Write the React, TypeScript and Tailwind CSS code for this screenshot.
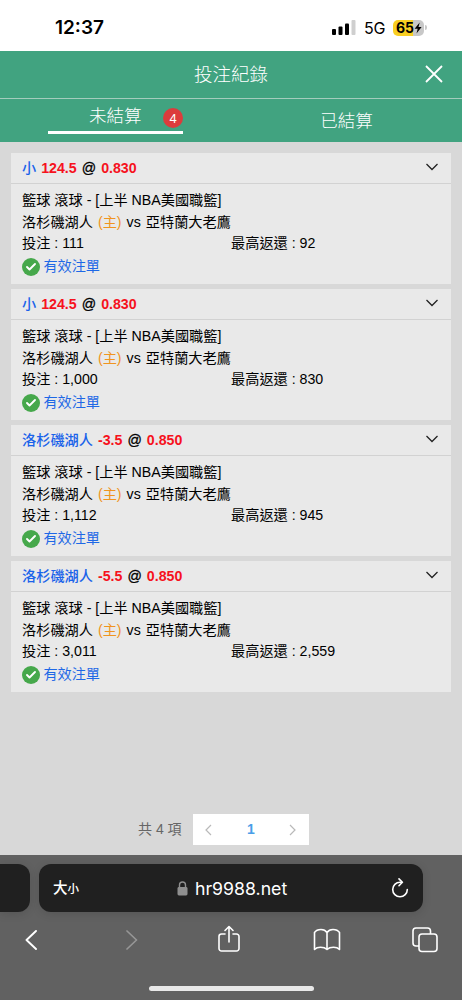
import { Check } from "lucide-react";

interface Bet {
  id: number;
  pick: string;
  line: string;
  odds: string;
  stake: string;
  payout: string;
}

const BETS: Bet[] = [
  { id: 1, pick: "小",         line: "124.5", odds: "0.830", stake: "111",   payout: "92" },
  { id: 2, pick: "小",         line: "124.5", odds: "0.830", stake: "1,000", payout: "830" },
  { id: 3, pick: "洛杉磯湖人", line: "-3.5",  odds: "0.850", stake: "1,112", payout: "945" },
  { id: 4, pick: "洛杉磯湖人", line: "-5.5",  odds: "0.850", stake: "3,011", payout: "2,559" },
];

function StatusBar() {
  return (
    <div className="h-[51px] bg-white flex items-center justify-between pl-[55px] pr-[35px] pt-[4px] font-['Inter','Liberation_Sans',sans-serif] text-black">
      <span className="text-[19px] font-semibold leading-none">12:37</span>
      <div className="flex items-center">
        <svg width="24" height="16" viewBox="0 0 24 16">
          <rect x="0" y="9" width="4" height="6" rx="1" />
          <rect x="6.5" y="6.5" width="4" height="8.5" rx="1" />
          <rect x="13" y="3.5" width="4" height="11.5" rx="1" />
          <rect x="19.5" y="0" width="4" height="15" rx="1" fill="#cfcfcf" />
        </svg>
        <span className="ml-[8px] w-[21px] text-[16px] leading-none tracking-[-0.2px]">5G</span>
        <div className="ml-[8px] w-[31px] h-[16px] rounded-[5px] bg-linear-to-r from-[#f9cf22] from-66% to-[#c8c8c8] to-66% flex items-center pl-[3px]">
          <span className="text-[14px] font-bold leading-none tracking-[-0.2px]">65</span>
          <svg width="8" height="12" viewBox="0 0 8 12">
            <path d="M5.7 0.5 0.6 6.8H3.7L2.5 11.5 7.6 5H4.5Z" />
          </svg>
        </div>
        <span className="ml-px w-[2px] h-[5px] rounded-r-full bg-[#c8c8c8]" />
      </div>
    </div>
  );
}

function Header() {
  return (
    <header className="bg-[#41a380] text-white">
      <div className="h-[47px] grid grid-cols-[60px_1fr_60px] items-center">
        <h1 className="col-start-2 pt-px text-center text-[18.5px] font-light leading-none">投注紀錄</h1>
        <button className="justify-self-center pl-[4px]">
          <svg width="18" height="18" viewBox="0 0 18 18" fill="none" stroke="currentColor" strokeWidth="1.8" className="-translate-y-px">
            <path d="M1 1 17 17M17 1 1 17" />
          </svg>
        </button>
      </div>
      <div className="h-[44px] flex border-t border-[#a3ccbd]">
        <div className="w-1/2 flex justify-center">
          <div className="w-[135px] h-[35px] border-b-[3px] border-white flex items-center pl-[41px] pt-[4px]">
            <span className="text-[17.5px] font-light leading-none">未結算</span>
            <span className="ml-auto mt-[2px] size-[20px] rounded-full bg-[#dc3c3c] flex items-center justify-center text-[13px] leading-none">4</span>
          </div>
        </div>
        <div className="w-1/2 h-[42px] pt-[3px] flex items-center justify-center">
          <span className="text-[17.5px] font-light leading-none">已結算</span>
        </div>
      </div>
    </header>
  );
}

function BetCard({ bet }: { bet: Bet }) {
  return (
    <article className="h-[131px] bg-[#e9e9e9] text-[14.2px] text-black">
      <div className="h-[31px] flex items-center justify-between border-b border-[#d2d2d2] pl-[11px] pr-[13px]">
        <div className="flex items-center gap-[5px] font-bold leading-none">
          <span className="font-medium text-[#1a63ea]">{bet.pick}</span>
          <span className="text-[#f6121d]">{bet.line}</span>
          <span className="font-normal [-webkit-text-stroke:0.3px_black]">@</span>
          <span className="text-[#f6121d]">{bet.odds}</span>
        </div>
        <svg width="12" height="8" viewBox="0 0 12 8" fill="none" stroke="#222" strokeWidth="1.3" className="-translate-y-px">
          <path d="M0.500 1 6 6.500 11.500 1" />
        </svg>
      </div>
      <div className="pl-[11px] pt-[6px] leading-[21.6px] whitespace-nowrap">
        <div>籃球 滾球 - [上半 NBA美國職籃]</div>
        <div className="flex gap-[5px]">
          <span>洛杉磯湖人</span>
          <span className="text-[#f0941f]">(主)</span>
          <span>vs</span>
          <span>亞特蘭大老鷹</span>
        </div>
        <div className="flex">
          <span className="w-[209px]">投注 : {bet.stake}</span>
          <span>最高返還 : {bet.payout}</span>
        </div>
        <div className="flex items-center gap-[4px] pt-px tracking-[-0.1px] text-[#1e68e6]">
          <span className="-ml-[0.5px] size-[18px] rounded-full bg-[#46a84b] flex items-center justify-center">
            <Check size={12} strokeWidth={3.8} className="text-white" />
          </span>
          有效注單
        </div>
      </div>
    </article>
  );
}

function Pagination() {
  return (
    <div className="flex items-center pl-[138px] h-[31px] text-[14px] text-[#666]">
      <span className="w-[55px]">共 4 項</span>
      <div className="w-[116px] h-[31px] bg-white flex items-center justify-between px-[12px] text-[#b9b9b9]">
        <svg width="7" height="12" viewBox="0 0 7 12" fill="none" stroke="currentColor" strokeWidth="1.2">
          <path d="M6 1 1 6 6 11" />
        </svg>
        <span className="font-['Liberation_Sans',sans-serif] font-bold text-[14px] text-[#4a9ee8]">1</span>
        <svg width="7" height="12" viewBox="0 0 7 12" fill="none" stroke="currentColor" strokeWidth="1.2" className="-translate-x-px">
          <path d="M1 1 6 6 1 11" />
        </svg>
      </div>
    </div>
  );
}

function BrowserBar() {
  return (
    <footer className="h-[145px] bg-[#616161] text-white flex flex-col">
      <div className="pt-[9px] flex gap-[9px]">
        <div className="w-[30px] h-[48px] rounded-r-[12px] bg-[#202020] shadow-[0_2px_10px_rgba(0,0,0,0.12)]" />
        <div className="w-[384px] h-[48px] rounded-[12px] bg-[#202020] flex items-center pl-[14px] pr-[14px] shadow-[0_2px_10px_rgba(0,0,0,0.12)]">
          <span className="w-[124px] flex items-baseline font-medium leading-none">
            <span className="text-[14.5px]">大</span>
            <span className="text-[11.5px]">小</span>
          </span>
          <svg width="11" height="15" viewBox="0 0 11 15" className="text-[#8f8f8f]">
            <rect x="0.5" y="6" width="10" height="8.5" rx="1.4" fill="currentColor" />
            <path d="M2.5 6.5V4a3 3 0 0 1 6 0v2.5" fill="none" stroke="currentColor" strokeWidth="1.4" />
          </svg>
          <span className="ml-[7px] pt-px font-['Inter','Liberation_Sans',sans-serif] text-[17.7px] leading-none">hr9988.net</span>
          {/* reload */}
          <svg width="18" height="20" viewBox="0 0 18 20" fill="none" stroke="currentColor" strokeWidth="1.6" strokeLinecap="round" strokeLinejoin="round" className="ml-auto">
            <path d="M10.500 4.200H9A7.300 7.300 0 1 0 16.300 11.500" />
            <path d="M8 0.900 11.400 4.300 8 7.700" />
          </svg>
        </div>
      </div>
      <nav className="h-[55px] flex items-center pl-[25px]">
        <svg width="12" height="20" viewBox="0 0 12 20" fill="none" stroke="currentColor" strokeWidth="1.9" strokeLinecap="round" strokeLinejoin="round">
          <path d="M11 1 1.5 10 11 19" />
        </svg>
        <svg width="12" height="20" viewBox="0 0 12 20" fill="none" stroke="#969696" strokeWidth="1.7" strokeLinecap="round" strokeLinejoin="round" className="ml-[89px]">
          <path d="M1 1 10.5 10 1 19" />
        </svg>
        <svg width="22" height="28" viewBox="0 0 22 28" fill="none" stroke="currentColor" strokeWidth="1.6" strokeLinecap="round" strokeLinejoin="round" className="ml-[80px] -translate-y-px">
          <path d="M7 9H3.5A2.5 2.5 0 0 0 1 11.5v12A2.5 2.5 0 0 0 3.5 26h15a2.5 2.5 0 0 0 2.5-2.5v-12A2.5 2.5 0 0 0 18.5 9H15" />
          <path d="M11 17V1.500M7 5.500l4-4 4 4" />
        </svg>
        <svg width="28" height="24" viewBox="0 0 28 24" fill="none" stroke="currentColor" strokeWidth="1.6" strokeLinejoin="round" className="ml-[73px]">
          <path d="M14 4.500C12.500 2.200 10.500 1.500 8 1.500S3 2.200 1.500 4.500v17C3 19.900 5 19.300 7.500 19.300s5 0.700 6.500 2.200c1.500-1.500 4-2.200 6.500-2.200s4.500 0.600 6 2.200v-17C25 2.200 22.500 1.500 20 1.500S15.500 2.200 14 4.500ZM14 4.500v17" />
        </svg>
        <svg width="26" height="26" viewBox="0 0 26 26" fill="none" stroke="currentColor" strokeWidth="1.6" strokeLinejoin="round" className="ml-[71px]">
          <path d="M7 19H4a3 3 0 0 1-3-3V4a3 3 0 0 1 3-3h11.500a3 3 0 0 1 3 3v3" />
          <rect x="7" y="7" width="18" height="17.5" rx="3" />
        </svg>
      </nav>
      <div className="mt-auto mb-[9px] ml-[149px] w-[165px] h-[5px] rounded-full bg-[#e8e8e8]" />
    </footer>
  );
}

export default function App() {
  return (
    <div className="w-[462px] h-[1000px] flex flex-col overflow-hidden bg-[#d8d8d8] font-['Liberation_Sans','Noto_Sans_CJK_TC',sans-serif]">
      <StatusBar />
      <Header />
      <main className="flex-1 flex flex-col pt-[11px] pb-[10px]">
        <div className="px-[11px] flex flex-col gap-[5px]">
          {BETS.map((bet) => (
            <BetCard key={bet.id} bet={bet} />
          ))}
        </div>
        <div className="mt-auto">
          <Pagination />
        </div>
      </main>
      <BrowserBar />
    </div>
  );
}
